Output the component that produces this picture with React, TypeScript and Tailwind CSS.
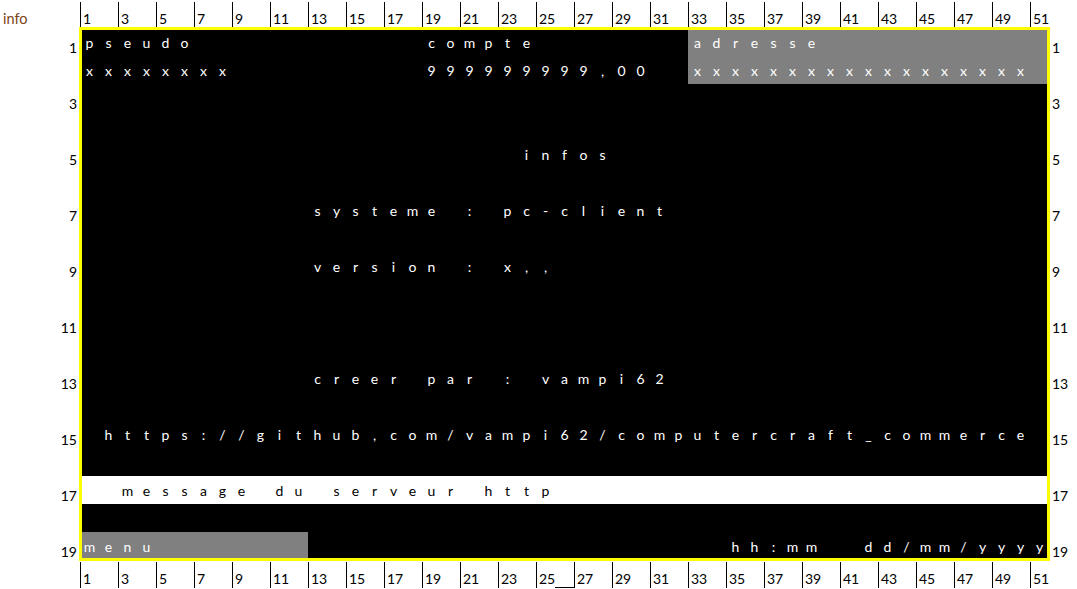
import React from "react";

type Seg = { row: number; col: number; text: string };

const COLS = 51;
const ROWS = 19;

// each character sits in its own cell, like the spreadsheet mockup
const segments: Seg[] = [
  { row: 1, col: 1, text: "pseudo" },
  { row: 1, col: 19, text: "compte" },
  { row: 1, col: 33, text: "adresse" },
  { row: 2, col: 1, text: "xxxxxxxx" },
  { row: 2, col: 19, text: "999999999,00" },
  { row: 2, col: 33, text: "xxxxxxxxxxxxxxxxxx" },
  { row: 5, col: 24, text: "infos" },
  { row: 7, col: 13, text: "systeme : pc-client" },
  { row: 9, col: 13, text: "version : x,," },
  { row: 13, col: 13, text: "creer par : vampi62" },
  { row: 15, col: 2, text: "https://github,com/vampi62/computercraft_commerce" },
  { row: 17, col: 3, text: "message du serveur http" },
  { row: 19, col: 1, text: "menu" },
  { row: 19, col: 35, text: "hh:mm" },
  { row: 19, col: 42, text: "dd/mm/yyyy" },
];

function buildMatrix() {
  const m: string[][] = Array.from({ length: ROWS }, () => Array(COLS).fill(""));
  segments.forEach((s) => {
    s.text.split("").forEach((ch, i) => {
      if (ch !== " ") m[s.row - 1][s.col - 1 + i] = ch;
    });
  });
  return m;
}

function cellBg(row: number, col: number) {
  if (row <= 2 && col >= 33) return "bg-[#808080] text-white";
  if (row === 17) return "bg-white text-black";
  if (row === 19 && col <= 12) return "bg-[#808080] text-white";
  return "bg-black text-white";
}

function ColumnHeader({ bottom }: { bottom?: boolean }) {
  return (
    <div className="flex">
      {Array.from({ length: COLS }, (_, i) => {
        const n = i + 1;
        const odd = n % 2 === 1;
        return (
          <div
            key={n}
            className={`w-[19px] shrink-0 h-[26px] pl-[2px] pt-[10px] leading-none whitespace-nowrap text-black ${
              odd ? "border-l border-black" : ""
            } ${bottom && n === 26 ? "border-b border-black" : ""}`}
          >
            {odd ? n : ""}
          </div>
        );
      })}
    </div>
  );
}

export default function App() {
  const matrix = buildMatrix();

  return (
    <div className="w-[1077px] h-[589px] overflow-hidden bg-white font-[Lato,sans-serif] text-[14px]">
      {/* top header */}
      <div className="flex h-[28px] pt-[2px]">
        <div className="w-[80px] shrink-0 pl-[3px] pt-[10px] leading-none text-[14.5px] text-[#7b4413]">info</div>
        <ColumnHeader />
      </div>

      <div className="flex">
        {/* row numbers left */}
        <div className="w-[80px] shrink-0 flex flex-col">
          {Array.from({ length: ROWS }, (_, i) => (
            <div key={i} className="h-[28px] flex items-end justify-end pr-[3px] pb-[1px] leading-none text-black">
              {i % 2 === 0 ? i + 1 : ""}
            </div>
          ))}
        </div>

        {/* terminal screen */}
        <div className="grid grid-cols-[repeat(51,19px)] grid-rows-[repeat(19,28px)] outline-solid outline-[3px] outline-[#ffff00] -outline-offset-2">
          {matrix.map((line, r) =>
            line.map((ch, c) => (
              <div key={`${r}-${c}`} className={`${cellBg(r + 1, c + 1)} text-center leading-[30px]`}>
                {ch}
              </div>
            ))
          )}
        </div>

        {/* row numbers right */}
        <div className="flex-1 flex flex-col">
          {Array.from({ length: ROWS }, (_, i) => (
            <div key={i} className="h-[28px] flex items-end pl-[3px] pb-[1px] leading-none text-black">
              {i % 2 === 0 ? i + 1 : ""}
            </div>
          ))}
        </div>
      </div>

      {/* bottom header */}
      <div className="flex pt-[2px]">
        <div className="w-[80px] shrink-0" />
        <ColumnHeader bottom />
      </div>
    </div>
  );
}
